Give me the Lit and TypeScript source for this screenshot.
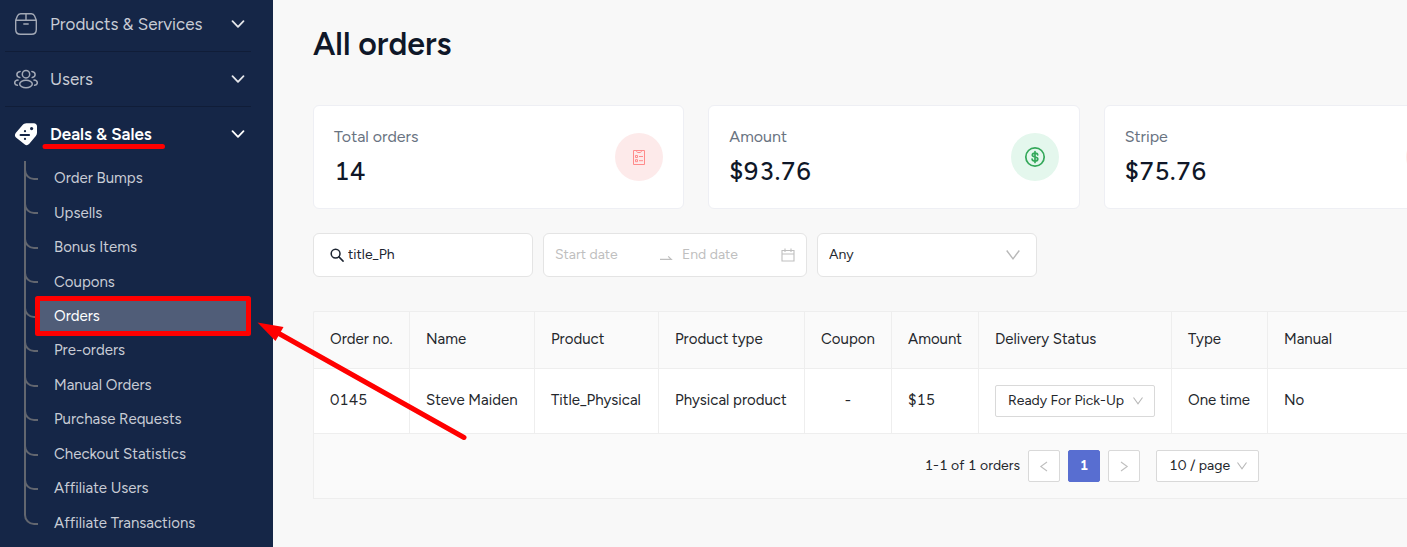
import { LitElement, html, css, svg, nothing } from "lit";
import { customElement, state } from "lit/decorators.js";
import { classMap } from "lit/directives/class-map.js";

const icons = {
  box: svg`<svg width="24" height="24" viewBox="0 0 24 24" fill="none" stroke="currentColor" stroke-width="1.4" stroke-linecap="round" stroke-linejoin="round"><path d="M1.700 8.300 3.400 4c.600-1.500 1.600-2.300 3.200-2.300h10.800c1.600 0 2.600.800 3.200 2.300l1.700 4.300v9.200c0 3-1.800 4.800-4.800 4.800h-11c-3 0-4.800-1.800-4.800-4.800zM1.700 8.300h20.600M12 1.700v6.600M9.800 12h4.400"/></svg>`,
  users: svg`<svg width="24" height="24" viewBox="0 0 24 24" fill="none" stroke="currentColor" stroke-width="1.5" stroke-linecap="round" stroke-linejoin="round"><circle cx="12" cy="7.200" r="3.700"/><ellipse cx="12" cy="17" rx="6.300" ry="3.700"/><path d="M5.800 10.600C4 10.400 2.900 9.200 2.900 7.600s1.200-3 3.200-3.200M18.200 10.600c1.800-.200 2.900-1.400 2.900-3s-1.200-3-3.200-3.200M3.400 18.300c-1.600-.300-2.700-1.200-2.700-2.500 0-1.400 1.300-2.500 3.300-2.700M20.600 18.300c1.600-.300 2.700-1.200 2.700-2.500 0-1.400-1.300-2.500-3.300-2.700"/></svg>`,
  deals: svg`<svg width="24" height="24" viewBox="0 0 24 24"><path fill="currentColor" d="M12.400 1.200h7.500c1.800 0 3.100 1.300 3.100 3.100v6.500c0 1.300-.400 2.300-1.200 3.300l-6.700 8c-1.400 1.500-3.100 1.500-4.600.200L2 15.500C.600 14 .600 12.200 1.900 10.700l6.700-7.600c1-1.200 2.200-1.900 3.800-1.900z"/><path stroke="#152647" stroke-width="1.9" fill="none" stroke-linecap="round" d="M6.500 13h8.600"/><g fill="#152647"><circle cx="11" cy="9.200" r="1.100"/><circle cx="11" cy="16.900" r="1.100"/><circle cx="17.600" cy="6.600" r="1.600"/></g></svg>`,
  chevron: svg`<svg width="14" height="14" viewBox="0 0 14 14" fill="none" stroke="currentColor" stroke-width="1.8" stroke-linecap="round" stroke-linejoin="round"><path d="M1.500 4.200 7 9.800l5.500-5.600"/></svg>`,
  list: svg`<svg width="14" height="18" viewBox="0 0 14 18" fill="none" stroke="currentColor" stroke-width="1"><path d="M1.500 2.500h11v14h-11zM4.500 2.500c0 1 .5 2 1.300 2h2.400c.800 0 1.300-1 1.300-2M3.500 7.500h2v2h-2zM3.500 11.700h2v2h-2zM7 8.500h4M7 12.700h4"/></svg>`,
  dollar: svg`<svg width="22" height="22" viewBox="0 0 22 22" fill="none" stroke="currentColor" stroke-width="1.7" stroke-linecap="round"><circle cx="11" cy="11" r="9.200"/><path d="M13.700 8.800c-.200-1.100-1.200-1.700-2.700-1.700s-2.700.600-2.700 1.900c0 2.800 5.500 1.200 5.500 4 0 1.300-1.200 2-2.800 2s-2.700-.700-2.900-1.900M11 5.600v10.800"/></svg>`,
  search: svg`<svg width="14" height="14" viewBox="0 0 14 14" fill="none" stroke="currentColor" stroke-width="1.5" stroke-linecap="round"><circle cx="5.600" cy="5.600" r="4.400"/><path d="m8.900 8.900 4.200 4.200"/></svg>`,
  swap: svg`<svg width="14" height="14" viewBox="0 0 14 14" fill="none" stroke="currentColor" stroke-width="1.2"><path d="M1 11.400h11.300L9.200 8.300"/></svg>`,
  calendar: svg`<svg width="14" height="14" viewBox="0 0 14 14" fill="none" stroke="currentColor" stroke-width="1.1"><path d="M1 2.500h12v10.500H1zM1 6h12M4 .500v3.500M10 .500v3.500"/></svg>`,
  down: svg`<svg width="14" height="12" viewBox="0 0 14 12" fill="none" stroke="currentColor" stroke-width="1.4"><path d="m.700 1.500 6.300 8.300 6.300-8.300"/></svg>`,
  downSmall: svg`<svg width="10" height="10" viewBox="0 0 10 10" fill="none" stroke="currentColor" stroke-width="1.1"><path d="m.500 1.500 4.500 6.300 4.500-6.300"/></svg>`,
  prev: svg`<svg width="10" height="12" viewBox="0 0 10 12" fill="none" stroke="currentColor" stroke-width="1.1"><path d="M8 2 1.800 6.500 8 11"/></svg>`,
  next: svg`<svg width="10" height="12" viewBox="0 0 10 12" fill="none" stroke="currentColor" stroke-width="1.1"><path d="M2 2 8.200 6.500 2 11"/></svg>`,
};

const menu = [
  { label: "Products & Services", icon: icons.box },
  { label: "Users", icon: icons.users },
  {
    label: "Deals & Sales",
    icon: icons.deals,
    children: [
      "Order Bumps", "Upsells", "Bonus Items", "Coupons", "Orders", "Pre-orders",
      "Manual Orders", "Purchase Requests", "Checkout Statistics",
      "Affiliate Users", "Affiliate Transactions",
    ],
  },
];

@customElement("side-menu")
class SideMenu extends LitElement {
  @state() private current = "Orders";

  static styles = css`
    :host { display: block; background: #152647; color: #c8ccd5; overflow: hidden; }
    nav { margin-top: -3px; padding: 0 22px 0 5px; }
    ul { list-style: none; margin: 0; padding: 0; }
    .group {
      display: grid; grid-template-columns: 24px 1fr 14px; align-items: center; gap: 12px;
      width: 100%; height: 54px; padding: 0 6px 0 9px; border: 0; background: none;
      color: inherit; font: 17px/24px Figtree, Lato, sans-serif; text-align: left;
    }
    .group svg { display: block; color: #e4e6ea; }
    .group svg:first-child { color: #a3a9b6; }
    .group.open, .group.open svg { color: #fff; }
    .group.open { font-weight: 600; }
    .section + .section { border-top: 1px solid #101d38; }
    .children { display: grid; grid-auto-rows: 1fr; height: 379px; margin-left: 19px; }
    .child { display: flex; align-items: center; }
    .child:not(:last-child) { border-left: 2px solid #62666f; }
    .child:not(:last-child) .branch { margin-left: -2px; }
    .branch {
      box-sizing: border-box; flex: none; align-self: flex-start; width: 14px; height: 19px;
      border: solid #62666f; border-width: 0 0 2px 2px; border-bottom-left-radius: 10px;
    }
    .link {
      flex: 1; margin-left: 2px; padding: 4px 14px; color: inherit; text-decoration: none;
      font: 15px/24px Figtree, Lato, sans-serif;
    }
    .link.current { background: #505d78; color: #fff; }
  `;

  render() {
    return html`<nav aria-label="Main"><ul>
      ${menu.map((m) => html`<li class="section">
        <button class=${classMap({ group: true, open: !!m.children })} aria-expanded=${m.children ? "true" : "false"}>
          ${m.icon}<span>${m.label}</span>${icons.chevron}
        </button>
        ${m.children
          ? html`<ul class="children">${m.children.map((c) => html`<li class="child">
              <span class="branch"></span>
              <a class=${classMap({ link: true, current: c === this.current })} href="#"
                @click=${(e: Event) => { e.preventDefault(); this.current = c; }}>${c}</a>
            </li>`)}</ul>`
          : nothing}
      </li>`)}
    </ul></nav>`;
  }
}

const stats = [
  { label: "Total orders", value: "14", tone: "rose", icon: icons.list },
  { label: "Amount", value: "$93.76", tone: "mint", icon: icons.dollar },
  { label: "Stripe", value: "$75.76", tone: "peach", icon: nothing },
];

@customElement("order-stats")
class OrderStats extends LitElement {
  static styles = css`
    :host { display: grid; grid-auto-flow: column; grid-auto-columns: calc((100% + 20px) / 3); gap: 24px; }
    .card {
      box-sizing: border-box; display: flex; align-items: center; justify-content: space-between;
      height: 104px; padding: 0 20px; background: #fff; border: 1px solid #eeeff4; border-radius: 6px;
    }
    .label { font-size: 16px; line-height: 24px; color: #697381; }
    .value { margin-top: 4px; font-size: 25px; line-height: 36px; font-weight: 500; color: #0f1728; }
    .badge { display: grid; place-items: center; width: 48px; height: 48px; border-radius: 50%; }
    .rose { background: #fdeaea; color: #ff8b8b; }
    .mint { background: #e4f7ed; color: #34a85a; }
    .peach { background: #ffefe9; }
  `;
  render() {
    return stats.map((s) => html`<section class="card">
      <div><div class="label">${s.label}</div><div class="value">${s.value}</div></div>
      <span class="badge ${s.tone}">${s.icon}</span>
    </section>`);
  }
}

const controlStyles = css`
  svg { display: block; }
  input, select, button { font: inherit; color: inherit; font-variant-numeric: inherit; }
  input { min-width: 0; padding: 0; border: 0; outline: 0; background: none; }
  input::placeholder { color: #bfbfbf; opacity: 1; }
  .select { display: grid; align-items: center; background: #fff; font-size: 14px; }
  .select select, .select svg { grid-area: 1 / 1; }
  .select select { appearance: none; width: 100%; height: 100%; margin: 0; border: 0; outline: 0; background: none; }
  .select svg { justify-self: end; color: #b8b8b8; pointer-events: none; }
`;

@customElement("order-filters")
class OrderFilters extends LitElement {
  static styles = [controlStyles, css`
    :host { display: flex; gap: 10px; font-size: 14px; line-height: 22px; color: #26292e; }
    .field {
      box-sizing: border-box; display: flex; align-items: center; width: 220px; height: 44px;
      background: #fff; border: 1px solid #e4e4e4; border-radius: 6px;
    }
    .search { gap: 4px; padding: 0 16px; color: #1c2431; }
    .search input { flex: 1; }
    .range { width: 264px; padding: 0 11px; color: #bfbfbf; }
    .range input { width: 92px; flex: none; }
    .range .swap { flex: none; margin: 0 9px 0 12px; }
    .range .cal { margin-left: auto; flex: none; }
    .select.field { display: grid; }
    .select select { padding: 0 11px; }
    .select svg { margin-right: 16px; }
  `];
  render() {
    return html`
      <label class="field search">${icons.search}<input type="text" aria-label="Search orders" .value=${"title_Ph"}></label>
      <div class="field range">
        <input type="text" aria-label="Start date" placeholder="Start date">
        <span class="swap">${icons.swap}</span>
        <input type="text" aria-label="End date" placeholder="End date">
        <span class="cal">${icons.calendar}</span>
      </div>
      <div class="field select"><select aria-label="Status"><option>Any</option></select>${icons.down}</div>`;
  }
}

@customElement("order-table")
class OrderTable extends LitElement {
  static styles = [controlStyles, css`
    :host { display: block; font-size: 15px; line-height: 22px; color: #24272c; background: #fafafa;
      border: solid #eee; border-width: 1px 0 1px 1px; border-top-left-radius: 2px; }
    table { width: 100%; table-layout: fixed; border-collapse: separate; border-spacing: 0; }
    th, td {
      box-sizing: border-box; padding: 0 16px 2px; text-align: left; font-weight: 400; white-space: nowrap;
      border: solid #eee; border-width: 0 1px 1px 0;
    }
    th:last-child, td:last-child { border-right: 0; }
    th { height: 57px; }
    td { height: 65px; background: #fff; }
    .control { padding-bottom: 0; }
    .center { text-align: center; }
    .c96 { width: 96px; } .c125 { width: 125px; } .c124 { width: 124px; } .c146 { width: 146px; }
    .c87 { width: 87px; } .c193 { width: 193px; }
    .select, .page {
      box-sizing: border-box; height: 32px; background: #fff; border: 1px solid #d9d9d9; border-radius: 2px;
    }
    .select select { padding: 0 12px; }
    .select svg { margin-right: 11px; }
    .pager {
      display: flex; align-items: center; justify-content: flex-end; gap: 8px; height: 64px;
      padding-right: 148px; font-size: 14px;
    }
    .page { display: grid; place-items: center; width: 32px; padding: 0; color: #bfbfbf; }
    .page.active { background: #586ed1; border-color: #586ed1; color: #fff; font-weight: 700; }
    .size { width: 103px; margin-left: 8px; }
  `];
  render() {
    const widths = ["c96", "c125", "c124", "c146", "c87", "c87", "c193", "c96", ""];
    const heads = ["Order no.", "Name", "Product", "Product type", "Coupon", "Amount", "Delivery Status", "Type", "Manual"];
    return html`<table>
        <colgroup>${widths.map((w) => html`<col class=${w}>`)}</colgroup>
        <thead><tr>${heads.map((h) => html`<th scope="col">${h}</th>`)}</tr></thead>
        <tbody><tr>
          <td>0145</td><td>Steve Maiden</td><td>Title_Physical</td><td>Physical product</td>
          <td class="center">-</td><td>$15</td>
          <td class="control"><div class="select"><select aria-label="Delivery status"><option>Ready For Pick-Up</option></select>${icons.downSmall}</div></td>
          <td>One time</td><td>No</td>
        </tr></tbody>
      </table>
      <div class="pager">
        <span>1-1 of 1 orders</span>
        <button class="page" aria-label="Previous page">${icons.prev}</button>
        <button class="page active" aria-current="page">1</button>
        <button class="page" aria-label="Next page">${icons.next}</button>
        <div class="select size"><select aria-label="Page size"><option>10 / page</option></select>${icons.downSmall}</div>
      </div>`;
  }
}

@customElement("app-root")
class AppRoot extends LitElement {
  static styles = css`
    :host {
      position: relative; display: grid; grid-template-columns: 273px minmax(0, 1fr); min-height: 100vh;
      background: #f8f8f8; font-family: Figtree, Lato, sans-serif; overflow: hidden;
    }
    main { padding: 24px 0 48px 40px; overflow: hidden; font-variant-numeric: tabular-nums; }
    h1 { margin: 0 0 41px; font-size: 32px; line-height: 40px; font-weight: 600; color: #0f1728; }
    order-filters { margin: 24px 0 34px; }
    .marks { position: absolute; top: 0; left: 0; pointer-events: none; }
  `;
  render() {
    return html`<side-menu></side-menu>
      <main>
        <h1>All orders</h1>
        <order-stats></order-stats>
        <order-filters></order-filters>
        <order-table></order-table>
      </main>
      <svg class="marks" width="480" height="450" viewBox="0 0 480 450" fill="none" stroke="#f00" stroke-width="5" stroke-linecap="round" stroke-linejoin="round" aria-hidden="true">
        <path d="M45 146.500h117.500M37.500 298.500h211v35h-211zM464 437.500 278 333"/>
        <path d="m257.500 322.500 26 4.500-8 14z" fill="#f00" stroke="none"/>
      </svg>`;
  }
}
